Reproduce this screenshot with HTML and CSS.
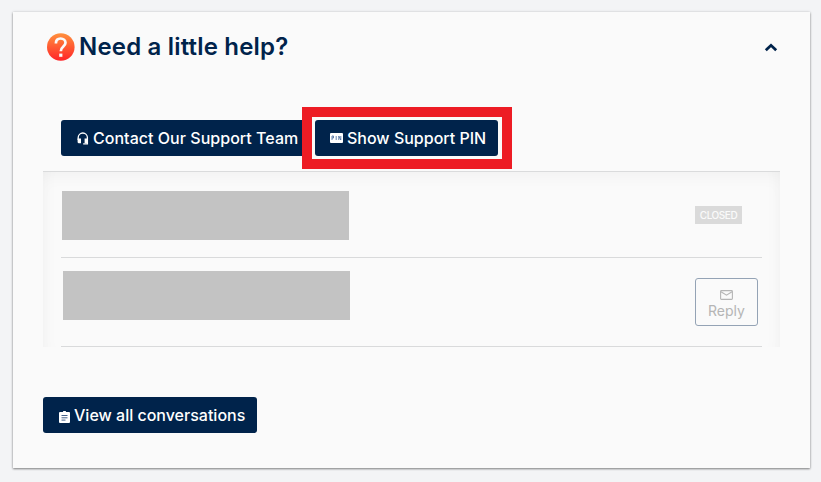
FILE: index.html
```html
<!DOCTYPE html>
<html lang="en">
<head>
<meta charset="utf-8">
<title>Need a little help?</title>
<link rel="stylesheet" href="styles.css">
</head>
<body>
<main class="card">
  <header class="card-header">
    <svg class="help-icon" viewBox="0 0 28 28" width="28" height="28" aria-hidden="true">
      <defs><linearGradient id="warm" x1="0" y1="0" x2="0" y2="1"><stop offset="0" stop-color="#ff913d"/><stop offset="1" stop-color="#ff2428"/></linearGradient></defs>
      <circle cx="13.8" cy="14" r="13.8" fill="url(#warm)"/>
      <path d="M8.9 10.4C8.9 7.2 10.8 5.5 13.6 5.5s4.9 1.7 4.9 4.3c0 3.7-4.7 3.9-4.7 8.4" fill="none" stroke="#fafafa" stroke-width="2.7"/>
      <path d="M12.2 20.6h3.2v3.2h-3.2z" fill="#fafafa"/>
    </svg>
    <h1 class="title">Need a little help?</h1>
    <svg class="chevron" viewBox="0 0 14 9" width="14" height="9" aria-hidden="true"><path d="M1.8 7.2 7 2.3l5.2 4.9" fill="none" stroke="#00234b" stroke-width="2.8"/></svg>
  </header>
  <div class="actions">
    <button class="btn btn-contact">
      <svg viewBox="0 0 12 13" width="12" height="13" aria-hidden="true"><path d="M1.2 8V5.6a4.6 4.6 0 0 1 9.2 0v6.3H6.2" fill="none" stroke="#fff" stroke-width="1.3"/><path d="M.6 6.6H4v4.7H2A1.4 1.4 0 0 1 .6 9.9zM7.6 6.6H11v4.7H7.6z" fill="#fff"/></svg>
      <span>Contact Our Support Team</span>
    </button>
    <button class="btn btn-pin">
      <svg viewBox="0 0 13 10" width="13" height="10" aria-hidden="true"><rect width="13" height="10" rx="1" fill="#fff"/><path d="M2 7V3h1.5v2H2M6.2 3v4M8.8 7V3l2 4V3" fill="none" stroke="#496c9d" stroke-width=".85"/></svg>
      <span>Show Support PIN</span>
    </button>
  </div>
  <section class="conversations">
    <div class="row row-closed">
      <div class="placeholder"></div>
      <span class="badge">CLOSED</span>
    </div>
    <div class="row row-open">
      <div class="placeholder"></div>
      <button class="reply">
        <svg viewBox="0 0 13 10" width="13" height="10" aria-hidden="true"><rect x=".6" y=".6" width="11.8" height="8.8" rx=".8" fill="none" stroke="#b5b5b5" stroke-width="1.1"/><path d="m1 1.7 5.5 3.5L12 1.7" fill="none" stroke="#b5b5b5" stroke-width="1.1"/></svg>
        <span>Reply</span>
      </button>
    </div>
  </section>
  <button class="btn btn-all">
    <svg viewBox="0 0 11 12" width="11" height="12" aria-hidden="true"><path d="M0 2q0-1 1-1h3a1.5 1.5 0 0 1 3 0h3q1 0 1 1v9q0 1-1 1H1q-1 0-1-1z" fill="#fff"/><path d="M2.5 4.5h6M2.5 6.8h6M2.5 9.1h4" stroke="#45618a" stroke-width="1"/></svg>
    <span>View all conversations</span>
  </button>
</main>
</body>
</html>
```

FILE: styles.css
```css
* { box-sizing: border-box; }

body {
  margin: 0;
  padding: 12px 11px 14px 13px;
  height: 482px;
  overflow: hidden;
  background: #f3f4f6;
  font-family: Inter, "Liberation Sans", sans-serif;
}

button { font: inherit; }
svg { display: block; flex: none; }

.card {
  height: 456px;
  padding: 0 30px;
  background: #fafafa;
  box-shadow: 0 1px 2px rgba(0, 0, 0, .45), 0 0 3px rgba(0, 0, 0, .12);
}

.card-header {
  display: flex;
  align-items: center;
  height: 70px;
  padding: 0 2px 0 4px;
}

.title {
  margin: 0 auto 0 4px;
  color: #00234b;
  font-size: 24px;
  font-weight: 600;
  letter-spacing: .18px;
  line-height: 30px;
}

.actions {
  display: flex;
  gap: 5px;
  height: 89px;
  padding: 38px 18px 0;
}

.btn {
  display: flex;
  align-items: center;
  height: 36px;
  padding: 0 0 0 16px;
  border: 0;
  border-radius: 3px;
  background: #00234b;
  color: #fff;
  font-size: 16px;
  font-weight: 500;
  line-height: 20px;
  white-space: nowrap;
}

.btn span { margin-left: 4px; }
.btn-contact { width: 249px; }
.btn-contact span { letter-spacing: .03px; }

.btn-pin {
  position: relative;
  width: 183px;
  padding-left: 15px;
}

.btn-pin::after {
  content: "";
  position: absolute;
  inset: -13px -14px -13px -13px;
  border: 10px solid #ed1c24;
}

.conversations {
  width: 737px;
  height: 176px;
  padding: 0 18px;
  border-top: 1px solid #dadbdc;
  box-shadow: inset 0 10px 20px -10px rgba(0, 0, 0, .055), inset 14px 0 16px -12px rgba(0, 0, 0, .03), inset -14px 0 16px -12px rgba(0, 0, 0, .03);
}

.row {
  display: flex;
  justify-content: space-between;
  align-items: flex-start;
  border-bottom: 1px solid #d9dadb;
}

.row-closed {
  height: 86px;
  padding: 19px 20px 0 1px;
}

.row-open {
  height: 89px;
  padding: 13px 4px 0 2px;
}

.placeholder {
  width: 287px;
  height: 49px;
  background: #c3c3c3;
}

.badge {
  width: 47px;
  height: 18px;
  margin-top: 15px;
  background: #dadada;
  color: #fafafa;
  font-size: 10px;
  font-weight: 500;
  letter-spacing: -.45px;
  line-height: 19px;
  text-align: center;
}

.reply {
  display: flex;
  flex-direction: column;
  align-items: center;
  width: 63px;
  height: 48px;
  margin-top: 7px;
  padding: 11px 0 0;
  border: 1px solid #94a3b5;
  border-radius: 3px;
  background: transparent;
  color: #b5b5b5;
  font-size: 14px;
  line-height: 17px;
}

.reply span { margin-top: 2px; }

.btn-all {
  width: 214px;
  margin-top: 50px;
}

.btn-all svg { margin-top: 3px; }
```
